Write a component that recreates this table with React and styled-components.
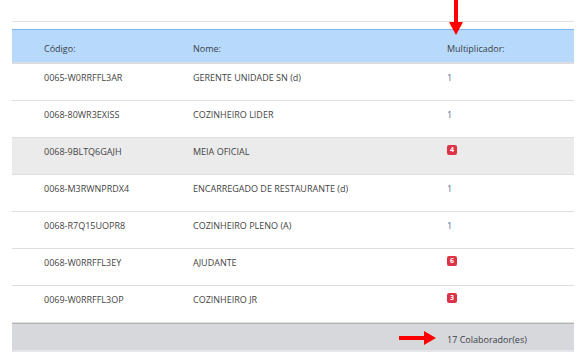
import React from "react";
import styled, { createGlobalStyle } from "styled-components";

const Global = createGlobalStyle`
  html, body { margin: 0; padding: 0; background: #fff; }
  body { font-family: "Open Sans", "Liberation Sans", sans-serif; }
`;

const Page = styled.div`
  position: relative;
  width: 578px;
  height: 358px;
  padding: 21px 4px 0 12px;
  box-sizing: border-box;
  overflow: hidden;
`;

const TopRule = styled.div`
  height: 1px;
  background: #e2e2e6;
  margin-bottom: 7px;
`;

const Table = styled.div`
  display: flex;
  flex-direction: column;
`;

const Row = styled.div`
  display: grid;
  grid-template-columns: 149px 254px 1fr;
  padding-left: 32px;
  box-sizing: border-box;
  font-size: 9px;
  color: #444;
  line-height: 12px;
`;

const HeadRow = styled(Row)`
  height: 35px;
  padding-top: 13px;
  background: #b7dafc;
  border-top: 1px solid #7db6ef;
  border-bottom: 2px solid #dcdde0;
  color: #3a3f47;
`;

const BodyRow = styled(Row)`
  height: 37px;
  padding-top: 8px;
  background: ${(p) => (p.$shaded ? "#ebebeb" : "#fff")};
  border-bottom: 1px solid #dedede;
  &:last-of-type { border-bottom: none; }
`;

const FootRow = styled(Row)`
  height: 29px;
  padding-top: 10px;
  background: #d7d8dc;
  border-top: 1px solid #b3b3b8;
  border-bottom: 2px solid #e6e6ea;
  color: #3a3f47;
`;

const Cell = styled.div`
  white-space: nowrap;
`;

const Num = styled.span`
  color: #4a6d92;
`;

const Badge = styled.span`
  display: inline-flex;
  align-items: center;
  justify-content: center;
  width: 10px;
  height: 10px;
  border-radius: 2px;
  background: #dd3346;
  color: #fff;
  font-size: 7px;
  font-weight: 700;
  line-height: 10px;
  vertical-align: top;
  margin-top: -1px;
`;

const Arrow = styled.svg`
  position: absolute;
  left: ${(p) => p.$x}px;
  top: ${(p) => p.$y}px;
`;

const rows = [
  ["0065-W0RRFFL3AR", "GERENTE UNIDADE SN (d)", 1],
  ["0068-80WR3EXISS", "COZINHEIRO LIDER", 1],
  ["0068-9BLTQ6GAJH", "MEIA OFICIAL", 4],
  ["0068-M3RWNPRDX4", "ENCARREGADO DE RESTAURANTE (d)", 1],
  ["0068-R7Q15UOPR8", "COZINHEIRO PLENO (A)", 1],
  ["0068-W0RRFFL3EY", "AJUDANTE", 6],
  ["0069-W0RRFFL3OP", "COZINHEIRO JR", 3],
];

export default function App() {
  return (
    <>
      <Global />
      <Page>
        <TopRule />
        <Table>
          <HeadRow>
            <Cell>Código:</Cell>
            <Cell>Nome:</Cell>
            <Cell>Multiplicador:</Cell>
          </HeadRow>
          {rows.map(([code, name, m], i) => (
            <BodyRow key={code} $shaded={i === 2}>
              <Cell>{code}</Cell>
              <Cell>{name}</Cell>
              <Cell>{m > 1 ? <Badge>{m}</Badge> : <Num>{m}</Num>}</Cell>
            </BodyRow>
          ))}
          <FootRow>
            <Cell />
            <Cell />
            <Cell>17 Colaborador(es)</Cell>
          </FootRow>
        </Table>
        <Arrow $x={449} $y={0} width="15" height="36" viewBox="0 0 15 36">
          <rect x="5" y="0" width="4" height="23" fill="#f00" />
          <polygon points="0,22 14,22 7,35" fill="#f00" />
        </Arrow>
        <Arrow $x={399} $y={331} width="38" height="15" viewBox="0 0 38 15">
          <rect x="0" y="5" width="26" height="4" fill="#f00" />
          <polygon points="25,0 25,14 37,7" fill="#f00" />
        </Arrow>
      </Page>
    </>
  );
}
